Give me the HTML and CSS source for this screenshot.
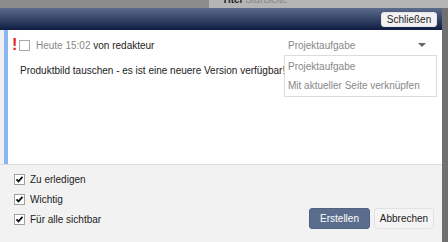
FILE: index.html
```html
<!DOCTYPE html>
<html lang="de">
<head>
<meta charset="utf-8">
<link rel="stylesheet" href="styles.css">
</head>
<body>
<div class="backdrop">
  <div class="bd-left"></div>
  <div class="bd-right"><span class="bd-title"><b>Titel</b> Startseite</span></div>
</div>
<div class="stage">
  <div class="dialog">
    <div class="header">
      <button class="btn-close">Schließen</button>
    </div>
    <div class="content">
      <div class="gutter"></div>
      <div class="accent"></div>
      <div class="body">
        <div class="row1">
          <span class="bang">!</span>
          <span class="cb"></span>
          <span class="meta"><span class="time">Heute 15:02</span> von redakteur</span>
          <div class="select">
            <span class="sel-text">Projektaufgabe</span>
            <span class="arrow"></span>
            <div class="menu">
              <div class="item">Projektaufgabe</div>
              <div class="item">Mit aktueller Seite verknüpfen</div>
            </div>
          </div>
        </div>
        <div class="message">Produktbild tauschen - es ist eine neuere Version verfügbar!</div>
      </div>
    </div>
    <div class="footer">
      <div class="checks">
        <label class="check"><span class="cb on"><svg viewBox="0 0 11 11" width="11" height="11"><path d="M1.8 5.2 L4.3 7.8 L9.2 2.4" fill="none" stroke="#111" stroke-width="2.2"/></svg></span>Zu erledigen</label>
        <label class="check"><span class="cb on"><svg viewBox="0 0 11 11" width="11" height="11"><path d="M1.8 5.2 L4.3 7.8 L9.2 2.4" fill="none" stroke="#111" stroke-width="2.2"/></svg></span>Wichtig</label>
        <label class="check"><span class="cb on"><svg viewBox="0 0 11 11" width="11" height="11"><path d="M1.8 5.2 L4.3 7.8 L9.2 2.4" fill="none" stroke="#111" stroke-width="2.2"/></svg></span>Für alle sichtbar</label>
      </div>
      <div class="actions">
        <button class="btn primary">Erstellen</button>
        <button class="btn">Abbrechen</button>
      </div>
    </div>
  </div>
  <div class="shade"></div>
</div>
</body>
</html>
```
FILE: styles.css
```css
* { box-sizing: border-box; }
html, body { margin: 0; padding: 0; }
body {
  width: 448px;
  height: 242px;
  overflow: hidden;
  font-family: "Liberation Sans", Arial, sans-serif;
  font-size: 10px;
  color: #222;
  background: #6f6f6f;
  display: flex;
  flex-direction: column;
}
.backdrop {
  height: 8px;
  display: flex;
  overflow: hidden;
}
.bd-left { width: 209px; background: #8c8c8c; }
.bd-right {
  flex: 1;
  background: #b5b5b5;
  position: relative;
  overflow: hidden;
}
.bd-title {
  position: absolute;
  left: 13px;
  top: -6px;
  font-size: 10px;
  color: #888;
  white-space: nowrap;
}
.bd-title b { color: #222; }
.stage {
  flex: 1;
  display: flex;
}
.dialog {
  width: 442px;
  display: flex;
  flex-direction: column;
}
.shade {
  flex: 1;
  background: #707070;
}
.header {
  height: 22px;
  background: linear-gradient(#5d6b8b, #0e1d42);
  display: flex;
  justify-content: flex-end;
  align-items: center;
  padding-right: 5px;
}
.btn-close {
  font-family: inherit;
  font-size: 10px;
  color: #222;
  background: #f2f2f2;
  border: 1px solid #e6e6e6;
  border-radius: 3px;
  height: 15px;
  width: 56px;
  padding: 0;
  line-height: 13px;
}
.content {
  height: 135px;
  display: flex;
  background: #fff;
  border-bottom: 1px solid #dcdcdc;
}
.gutter { width: 4px; background: #f0f0f0; }
.accent { width: 4px; background: #8ab4f4; }
.body {
  flex: 1;
  min-width: 0;
  padding: 6px 0 0 4px;
}
.row1 {
  display: flex;
  align-items: center;
  height: 18px;
  position: relative;
}
.bang {
  color: #e8201a;
  font-weight: bold;
  font-size: 16px;
  line-height: 18px;
  width: 7px;
}
.cb {
  width: 11px;
  height: 11px;
  border: 1px solid #a8a8a8;
  background: #fff;
  display: inline-flex;
  align-items: center;
  justify-content: center;
  flex: none;
}
.row1 .cb { margin-right: 6px; }
.time { color: #888; }
.select {
  position: absolute;
  left: 272px;
  top: 0;
  width: 153px;
  height: 18px;
  display: flex;
  align-items: center;
  padding-left: 4px;
  color: #888;
}
.arrow {
  position: absolute;
  right: 11px;
  top: 7px;
  width: 0;
  height: 0;
  border-left: 4px solid transparent;
  border-right: 4px solid transparent;
  border-top: 4px solid #666;
}
.menu {
  position: absolute;
  left: 0;
  top: 19px;
  width: 153px;
  background: #fff;
  border: 1px solid #dcdcdc;
  padding: 1px 0;
}
.item {
  height: 19px;
  line-height: 19px;
  padding-left: 3px;
  color: #888;
  white-space: nowrap;
}
.message {
  margin-top: 10px;
  padding-left: 8px;
  line-height: 14px;
  white-space: nowrap;
}
.footer {
  flex: 1;
  background: #f2f2f2;
  display: flex;
  justify-content: space-between;
  align-items: flex-end;
  padding: 7px 8px 13px 14px;
}
.checks {
  display: flex;
  flex-direction: column;
  gap: 6px;
  align-self: flex-start;
}
.check {
  display: flex;
  align-items: center;
  gap: 5px;
  height: 14px;
}
.check .cb { background: #fff; border-color: #a0a0a0; }
.actions {
  display: flex;
  gap: 4px;
}
.btn {
  font-family: inherit;
  font-size: 10px;
  height: 21px;
  padding: 0;
  width: 60px;
  border-radius: 3px;
  border: 1px solid #e2e2e2;
  background: #f4f4f4;
  color: #222;
}
.btn.primary {
  background: #5b6d8c;
  border-color: #52637f;
  color: #fff;
  width: 61px;
}
```
